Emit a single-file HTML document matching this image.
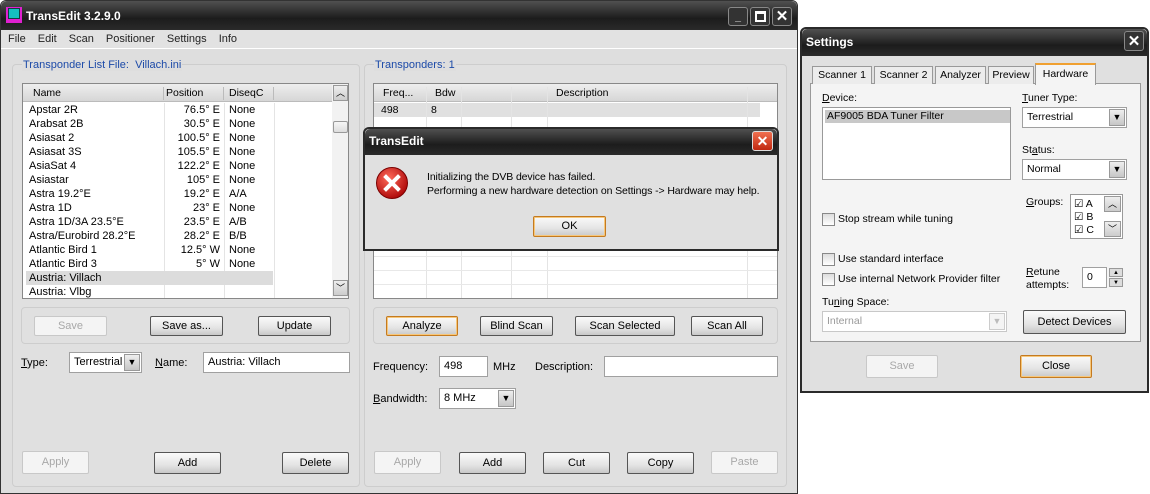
<!DOCTYPE html>
<html><head><meta charset="utf-8"><style>
*{box-sizing:border-box;margin:0;padding:0}
body{width:1150px;height:494px;background:#fff;font:10.5px "Liberation Sans",sans-serif;color:#000;position:relative;overflow:hidden}
.a{position:absolute}
.win{background:#dedede;border:1px solid #333}
.tb{background:linear-gradient(#505050,#1c1c1c 60%,#2a2a2a);color:#fff;font-weight:bold;font-size:12px}
.btn{position:absolute;border:1px solid #555;border-radius:2px;background:linear-gradient(#fafafa,#e4e4e4 60%,#c8c8c8);text-align:center;font-size:11px;line-height:18px}
.dis{border:1px solid #c8c8c8;background:#f4f4f4;color:#a8a8a8}
.def{border:1px solid #c47a20;box-shadow:inset 0 0 0 1px #f7c77a}
.grp{position:absolute;border:1px solid #cdcdcd;border-radius:4px;background:#e0e0e0}
.inp{position:absolute;background:#fff;border:1px solid #a0a0a0;padding-left:4px;line-height:19px}
.dd{position:absolute;right:1px;top:1px;bottom:1px;width:16px;background:linear-gradient(#eee,#c6c6c6);border:1px solid #999;font-size:9px;text-align:center;line-height:15px}
.row{position:absolute;left:0;height:14px;line-height:14px;white-space:nowrap}
.cb{position:absolute;width:13px;height:13px;border:1px solid #888;background:linear-gradient(#ddd,#fff)}
.blue{color:#1c4aa8}
</style></head><body>
<!-- main window -->
<div class="a win" style="left:0;top:0;width:798px;height:494px;border-radius:6px 6px 0 0"></div>
<div class="a tb" style="left:1px;top:1px;width:796px;height:29px;border-radius:6px 6px 0 0"></div>
<div class="a" style="left:6px;top:7px;width:16px;height:16px;background:#e020d0"><div class="a" style="left:2px;top:1px;width:12px;height:11px;background:#14c0c0;border:1px solid #104040"></div></div>
<div class="a" style="left:26px;top:9px;color:#fff;font-weight:bold;font-size:12px">TransEdit 3.2.9.0</div>
<div class="a" style="left:728px;top:7px;width:20px;height:19px;border:1px solid #888;border-radius:3px;background:#333;color:#fff;text-align:center;font-weight:bold;line-height:19px">_</div>
<div class="a" style="left:750px;top:7px;width:20px;height:19px;border:1px solid #888;border-radius:3px;background:#333"><div class="a" style="left:4px;top:3px;width:11px;height:11px;border:2px solid #fff;border-top-width:3px"></div></div>
<div class="a" style="left:772px;top:7px;width:20px;height:19px;border:1px solid #888;border-radius:3px;background:#333;color:#fff;text-align:center;font-size:15px;font-weight:bold;line-height:18px">✕</div>
<div class="a" style="left:1px;top:30px;width:796px;height:19px;background:#e2e2e2;border-bottom:1px solid #fff"></div>
<div class="a" style="left:8px;top:33px;font-size:11px;word-spacing:9px;color:#222">File Edit Scan Positioner Settings Info</div>

<div class="grp" style="left:12px;top:64px;width:348px;height:423px"></div>
<div class="a blue" style="left:22px;top:59px;background:#dedede;padding:0 1px;font-size:11px">Transponder List File:&nbsp; Villach.ini</div>
<div class="grp" style="left:364px;top:64px;width:423px;height:423px"></div>
<div class="a blue" style="left:374px;top:59px;background:#dedede;padding:0 1px;font-size:11px">Transponders: 1</div>

<!-- left list -->
<div class="a" style="left:22px;top:83px;width:327px;height:216px;background:#fff;border:1px solid #888;overflow:hidden">
 <div class="a" style="left:0;top:0;width:309px;height:18px;background:linear-gradient(#eee,#d6d6d6);border-bottom:1px solid #bbb"></div>
 <div class="a" style="left:10px;top:3px">Name</div><div class="a" style="left:143px;top:3px">Position</div><div class="a" style="left:206px;top:3px">DiseqC</div>
 <div class="a" style="left:140px;top:3px;width:1px;height:13px;background:#bbb"></div><div class="a" style="left:200px;top:3px;width:1px;height:13px;background:#bbb"></div><div class="a" style="left:250px;top:3px;width:1px;height:13px;background:#bbb"></div>
 <div class="a" style="left:141px;top:19px;width:1px;height:200px;background:#e4e4e4"></div><div class="a" style="left:201px;top:19px;width:1px;height:200px;background:#e4e4e4"></div><div class="a" style="left:251px;top:19px;width:1px;height:200px;background:#e4e4e4"></div>
 <div class="a" style="left:3px;top:187px;width:247px;height:14px;background:#dcdcdc"></div>
 <div class="a" style="left:6px;top:19px;font-size:11px">
  <div style="position:relative">
  <div class="row" style="top:0">Apstar 2R</div><div class="row" style="top:14px">Arabsat 2B</div><div class="row" style="top:28px">Asiasat 2</div><div class="row" style="top:42px">Asiasat 3S</div><div class="row" style="top:56px">AsiaSat 4</div><div class="row" style="top:70px">Asiastar</div><div class="row" style="top:84px">Astra 19.2°E</div><div class="row" style="top:98px">Astra 1D</div><div class="row" style="top:112px">Astra 1D/3A 23.5°E</div><div class="row" style="top:126px">Astra/Eurobird 28.2°E</div><div class="row" style="top:140px">Atlantic Bird 1</div><div class="row" style="top:154px">Atlantic Bird 3</div><div class="row" style="top:168px">Austria: Villach</div><div class="row" style="top:182px">Austria: Vlbg</div>
  </div></div>
 <div class="a" style="left:100px;top:19px;width:97px;text-align:right;font-size:11px">
  <div style="position:relative">
  <div class="row" style="top:0;right:0">76.5° E</div><div class="row" style="top:14px;right:0">30.5° E</div><div class="row" style="top:28px;right:0">100.5° E</div><div class="row" style="top:42px;right:0">105.5° E</div><div class="row" style="top:56px;right:0">122.2° E</div><div class="row" style="top:70px;right:0">105° E</div><div class="row" style="top:84px;right:0">19.2° E</div><div class="row" style="top:98px;right:0">23° E</div><div class="row" style="top:112px;right:0">23.5° E</div><div class="row" style="top:126px;right:0">28.2° E</div><div class="row" style="top:140px;right:0">12.5° W</div><div class="row" style="top:154px;right:0">5° W</div>
  </div></div>
 <div class="a" style="left:206px;top:19px;font-size:11px">
  <div style="position:relative">
  <div class="row" style="top:0">None</div><div class="row" style="top:14px">None</div><div class="row" style="top:28px">None</div><div class="row" style="top:42px">None</div><div class="row" style="top:56px">None</div><div class="row" style="top:70px">None</div><div class="row" style="top:84px">A/A</div><div class="row" style="top:98px">None</div><div class="row" style="top:112px">A/B</div><div class="row" style="top:126px">B/B</div><div class="row" style="top:140px">None</div><div class="row" style="top:154px">None</div>
  </div></div>
 <div class="a" style="left:309px;top:0;width:17px;height:214px;background:#f2f2f2"></div>
 <div class="a" style="left:310px;top:1px;width:15px;height:16px;border:1px solid #999;background:linear-gradient(#eee,#ccc);font-size:9px;text-align:center;line-height:14px">︿</div>
 <div class="a" style="left:310px;top:37px;width:15px;height:12px;border:1px solid #999;border-radius:2px;background:linear-gradient(#f6f6f6,#ddd)"></div>
 <div class="a" style="left:310px;top:196px;width:15px;height:16px;border:1px solid #999;background:linear-gradient(#eee,#ccc);font-size:9px;text-align:center;line-height:14px">﹀</div>
</div>

<!-- right list -->
<div class="a" style="left:373px;top:83px;width:405px;height:216px;background:#fff;border:1px solid #888;overflow:hidden">
 <div class="a" style="left:0;top:0;width:403px;height:18px;background:linear-gradient(#eee,#d6d6d6);border-bottom:1px solid #bbb"></div>
 <div class="a" style="left:9px;top:3px">Freq...</div><div class="a" style="left:61px;top:3px">Bdw</div><div class="a" style="left:182px;top:3px">Description</div>
 <div class="a" style="left:0;top:19px;width:386px;height:14px;background:#e0e0e0"></div>
 <div class="a" style="left:7px;top:20px">498</div><div class="a" style="left:57px;top:20px">8</div>
 <div class="a" style="left:52px;top:3px;width:1px;height:230px;background:#e4e4e4"></div>
 <div class="a" style="left:87px;top:3px;width:1px;height:230px;background:#e4e4e4"></div>
 <div class="a" style="left:137px;top:3px;width:1px;height:230px;background:#e4e4e4"></div>
 <div class="a" style="left:173px;top:3px;width:1px;height:230px;background:#e4e4e4"></div>
 <div class="a" style="left:373px;top:3px;width:1px;height:230px;background:#e4e4e4"></div>
 <div class="a" style="left:0;top:172px;width:403px;height:1px;background:#e8e8e8"></div>
 <div class="a" style="left:0;top:186px;width:403px;height:1px;background:#e8e8e8"></div>
 <div class="a" style="left:0;top:200px;width:403px;height:1px;background:#e8e8e8"></div>
</div>

<div class="grp" style="left:21px;top:307px;width:329px;height:37px"></div>
<div class="btn dis" style="left:34px;top:316px;width:73px;height:20px">Save</div>
<div class="btn" style="left:150px;top:316px;width:73px;height:20px">Save as...</div>
<div class="btn" style="left:258px;top:316px;width:73px;height:20px">Update</div>
<div class="a" style="left:21px;top:357px;font-size:11px"><u>T</u>ype:</div>
<div class="inp" style="left:69px;top:352px;width:73px;height:21px;font-size:11px">Terrestrial<div class="dd">▼</div></div>
<div class="a" style="left:155px;top:357px;font-size:11px"><u>N</u>ame:</div>
<div class="inp" style="left:203px;top:352px;width:147px;height:21px;font-size:11px">Austria: Villach</div>
<div class="btn dis" style="left:22px;top:451px;width:67px;height:23px;line-height:21px">Apply</div>
<div class="btn" style="left:154px;top:452px;width:67px;height:22px;line-height:20px">Add</div>
<div class="btn" style="left:282px;top:452px;width:67px;height:22px;line-height:20px">Delete</div>

<div class="grp" style="left:373px;top:307px;width:405px;height:37px"></div>
<div class="btn def" style="left:386px;top:316px;width:72px;height:20px">Analyze</div>
<div class="btn" style="left:480px;top:316px;width:73px;height:20px">Blind Scan</div>
<div class="btn" style="left:575px;top:316px;width:100px;height:20px">Scan Selected</div>
<div class="btn" style="left:691px;top:316px;width:72px;height:20px">Scan All</div>
<div class="a" style="left:373px;top:361px;font-size:11px">Frequency:</div>
<div class="inp" style="left:439px;top:356px;width:49px;height:21px;font-size:11px">498</div>
<div class="a" style="left:493px;top:361px;font-size:11px">MHz</div>
<div class="a" style="left:535px;top:361px;font-size:11px">Description:</div>
<div class="inp" style="left:604px;top:356px;width:174px;height:21px"></div>
<div class="a" style="left:373px;top:393px;font-size:11px"><u>B</u>andwidth:</div>
<div class="inp" style="left:439px;top:388px;width:77px;height:21px;font-size:11px">8 MHz<div class="dd">▼</div></div>
<div class="btn dis" style="left:374px;top:451px;width:67px;height:23px;line-height:21px">Apply</div>
<div class="btn" style="left:459px;top:452px;width:67px;height:22px;line-height:20px">Add</div>
<div class="btn" style="left:543px;top:452px;width:67px;height:22px;line-height:20px">Cut</div>
<div class="btn" style="left:627px;top:452px;width:67px;height:22px;line-height:20px">Copy</div>
<div class="btn dis" style="left:711px;top:451px;width:67px;height:23px;line-height:21px">Paste</div>

<!-- error dialog -->
<div class="a" style="left:363px;top:127px;width:416px;height:124px;background:#e0e0e0;border:2px solid #2a2a2a;border-radius:6px 6px 0 0"></div>
<div class="a tb" style="left:365px;top:129px;width:412px;height:26px;border-radius:5px 5px 0 0"></div>
<div class="a" style="left:369px;top:134px;color:#fff;font-weight:bold;font-size:12px">TransEdit</div>
<div class="a" style="left:752px;top:131px;width:21px;height:20px;border:1px solid #ddd;border-radius:3px;background:linear-gradient(#f07050,#c02810);color:#fff;text-align:center;font-size:14px;font-weight:bold;line-height:18px">✕</div>
<svg class="a" style="left:375px;top:166px" width="34" height="34"><defs><radialGradient id="r" cx="40%" cy="35%" r="65%"><stop offset="0" stop-color="#ff6a5a"/><stop offset="1" stop-color="#b00c0c"/></radialGradient></defs><circle cx="17" cy="17" r="15.5" fill="url(#r)" stroke="#7a0000"/><path d="M11 11L23 23M23 11L11 23" stroke="#fff" stroke-width="4" stroke-linecap="square"/></svg>
<div class="a" style="left:427px;top:170px;line-height:14px;font-size:10.5px;letter-spacing:-0.1px">Initializing the DVB device has failed.<br>Performing a new hardware detection on Settings -&gt; Hardware may help.</div>
<div class="btn def" style="left:533px;top:216px;width:73px;height:21px">OK</div>

<!-- settings -->
<div class="a win" style="left:800px;top:27px;width:349px;height:366px;border:2px solid #2a2a2a;border-radius:6px 6px 0 0;background:#e0e0e0"></div>
<div class="a tb" style="left:802px;top:29px;width:345px;height:27px;border-radius:5px 5px 0 0"></div>
<div class="a" style="left:806px;top:35px;color:#fff;font-weight:bold;font-size:12px">Settings</div>
<div class="a" style="left:1124px;top:31px;width:20px;height:20px;border:1px solid #888;border-radius:3px;background:#333;color:#fff;text-align:center;font-size:15px;font-weight:bold;line-height:19px">✕</div>
<div class="a" style="left:810px;top:83px;width:331px;height:259px;background:#f4f4f4;border:1px solid #999"></div>
<div class="a" style="left:812px;top:66px;width:60px;height:18px;border:1px solid #999;border-bottom:0;background:#ececec;text-align:center;line-height:17px">Scanner 1</div>
<div class="a" style="left:874px;top:66px;width:59px;height:18px;border:1px solid #999;border-bottom:0;background:#ececec;text-align:center;line-height:17px">Scanner 2</div>
<div class="a" style="left:935px;top:66px;width:51px;height:18px;border:1px solid #999;border-bottom:0;background:#ececec;text-align:center;line-height:17px">Analyzer</div>
<div class="a" style="left:988px;top:66px;width:46px;height:18px;border:1px solid #999;border-bottom:0;background:#ececec;text-align:center;line-height:17px">Preview</div>
<div class="a" style="left:1035px;top:63px;width:61px;height:22px;border:1px solid #999;border-top:2px solid #f0a030;border-bottom:0;background:#f4f4f4;text-align:center;line-height:18px">Hardware</div>
<div class="a" style="left:822px;top:92px"><u>D</u>evice:</div>
<div class="a" style="left:822px;top:107px;width:189px;height:73px;background:#fff;border:1px solid #999"><div class="a" style="left:2px;top:2px;width:185px;height:13px;background:#c8c8c8;padding-left:2px;line-height:13px">AF9005 BDA Tuner Filter</div></div>
<div class="a" style="left:1022px;top:92px"><u>T</u>uner Type:</div>
<div class="inp" style="left:1022px;top:107px;width:105px;height:21px">Terrestrial<div class="dd">▼</div></div>
<div class="a" style="left:1022px;top:144px">St<u>a</u>tus:</div>
<div class="inp" style="left:1022px;top:159px;width:105px;height:21px">Normal<div class="dd">▼</div></div>
<div class="a" style="left:1026px;top:196px"><u>G</u>roups:</div>
<div class="a" style="left:1070px;top:194px;width:53px;height:45px;background:#fff;border:1px solid #999;line-height:14px">
 <div class="a" style="left:3px;top:2px">☑ A</div><div class="a" style="left:3px;top:15px">☑ B</div><div class="a" style="left:3px;top:28px">☑ C</div>
 <div class="a" style="left:33px;top:1px;width:17px;height:16px;border:1px solid #999;background:linear-gradient(#eee,#ccc);font-size:9px;text-align:center;line-height:14px">︿</div>
 <div class="a" style="left:33px;top:26px;width:17px;height:16px;border:1px solid #999;background:linear-gradient(#eee,#ccc);font-size:9px;text-align:center;line-height:14px">﹀</div>
</div>
<div class="cb" style="left:822px;top:213px"></div><div class="a" style="left:838px;top:213px">Stop stream while tuning</div>
<div class="cb" style="left:822px;top:253px"></div><div class="a" style="left:838px;top:253px">Use standard interface</div>
<div class="cb" style="left:822px;top:273px"></div><div class="a" style="left:838px;top:273px">Use internal Network Provider filter</div>
<div class="a" style="left:1026px;top:266px;line-height:13px"><u>R</u>etune<br>attempts:</div>
<div class="inp" style="left:1082px;top:267px;width:25px;height:21px">0</div>
<div class="a" style="left:1109px;top:268px;width:14px;height:9px;border:1px solid #999;background:#ddd;font-size:6px;text-align:center;line-height:8px">▲</div>
<div class="a" style="left:1109px;top:278px;width:14px;height:9px;border:1px solid #999;background:#ddd;font-size:6px;text-align:center;line-height:8px">▼</div>
<div class="a" style="left:822px;top:296px">Tu<u>n</u>ing Space:</div>
<div class="inp" style="left:822px;top:311px;width:185px;height:21px;border-color:#c8c8c8;color:#999">Internal<div class="dd" style="background:#f4f4f4;border-color:#ccc;color:#bbb">▼</div></div>
<div class="btn" style="left:1023px;top:310px;width:103px;height:24px;line-height:22px">Detect Devices</div>
<div class="btn dis" style="left:866px;top:355px;width:72px;height:23px;line-height:21px">Save</div>
<div class="btn def" style="left:1020px;top:355px;width:72px;height:23px;line-height:21px">Close</div>
</body></html>
